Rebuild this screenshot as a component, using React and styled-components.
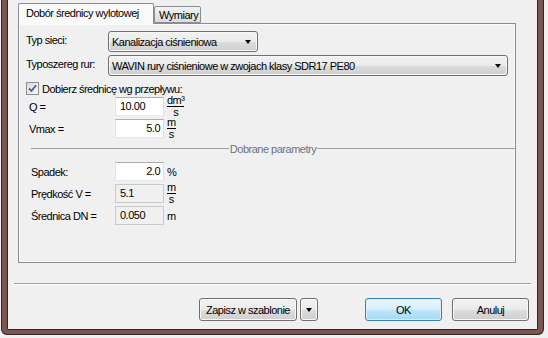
import React from 'react';
import styled, { createGlobalStyle } from 'styled-components';

const GlobalStyle = createGlobalStyle`
  html, body {
    margin: 0;
    padding: 0;
    background: #f0f0f0;
  }
  body {
    font-family: "Liberation Sans", Arial, sans-serif;
    font-size: 11px;
    letter-spacing: -0.5px;
    color: #000;
  }
  #root {
    width: 548px;
    height: 338px;
    overflow: hidden;
  }
`;

const Frame = styled.div`
  margin-left: 1px;
  width: 543px;
  height: 335px;
  box-sizing: border-box;
  background: #7a5651;
  border: 1px solid #2e2424;
  border-top: none;
  border-radius: 0 0 6px 6px;
  padding: 0 5px 4px 5px;
`;

const Client = styled.div`
  height: 100%;
  box-sizing: border-box;
  display: flex;
  flex-direction: column;
  background: #f0f0f0;
  border: 1px solid #2e2424;
  border-top: none;
  border-radius: 0 0 2px 2px;
`;

const TabArea = styled.div`
  padding: 3px 21px 0 10px;
`;

const TabStrip = styled.div`
  display: flex;
  align-items: flex-end;
  height: 20px;
`;

const Tab = styled.div`
  position: relative;
  box-sizing: border-box;
  width: ${({ $w }) => $w}px;
  height: ${({ $active }) => ($active ? 21 : 17)}px;
  margin-bottom: ${({ $active }) => ($active ? -1 : 0)}px;
  z-index: ${({ $active }) => ($active ? 1 : 0)};
  border: 1px solid #898c95;
  border-bottom: ${({ $active }) => ($active ? 'none' : '1px solid #898c95')};
  border-radius: 2px 2px 0 0;
  background: ${({ $active }) =>
    $active ? '#fafafa' : 'linear-gradient(#f3f3f3, #e6e6e6 50%, #dcdcdc)'};
  padding-left: ${({ $active }) => ($active ? 7 : 4)}px;
  line-height: ${({ $active }) => ($active ? 18 : 16)}px;
  white-space: nowrap;
`;

const Panel = styled.div`
  height: 240px;
  box-sizing: border-box;
  border: 1px solid #898c95;
  background: #f0f0f0;
  box-shadow: inset 0 0 0 1px #fbfbfb;
  padding: 7px 7px 0 7px;
  display: flex;
  flex-direction: column;
`;

const ComboRow = styled.div`
  display: flex;
  align-items: flex-start;
  margin-top: ${({ $mt }) => $mt || 0}px;
`;

const ComboLabel = styled.div`
  width: 82px;
  padding-top: 3px;
  white-space: nowrap;
`;

const Combo = styled.div`
  width: ${({ $w }) => $w}px;
  height: 21px;
  box-sizing: border-box;
  border: 1px solid #707070;
  border-radius: 3px;
  background: linear-gradient(#f2f2f2 0%, #ebebeb 50%, #dddddd 51%, #cfcfcf 100%);
  box-shadow: inset 0 0 0 1px #f8f8f8;
  display: flex;
  align-items: center;
  justify-content: space-between;
  padding: 0 6px 0 3px;
  white-space: nowrap;
`;

const Arrow = styled.span`
  width: 0;
  height: 0;
  border-left: 3px solid transparent;
  border-right: 3px solid transparent;
  border-top: 4px solid #000;
  margin-top: 1px;
`;

const CheckRow = styled.label`
  display: flex;
  align-items: center;
  height: 13px;
  margin-top: 6px;
`;

const CheckBox = styled.span`
  width: 13px;
  height: 13px;
  box-sizing: border-box;
  border: 1px solid #8e8f8f;
  background: linear-gradient(135deg, #dadada, #fbfbfb);
  display: flex;
  align-items: center;
  justify-content: center;
  margin-right: 3px;
`;

const FieldRow = styled.div`
  display: flex;
  align-items: center;
  height: 19px;
  margin-top: ${({ $mt }) => $mt || 0}px;
`;

const FieldLabel = styled.div`
  width: 89px;
  box-sizing: border-box;
  padding-left: ${({ $indent }) => $indent}px;
  white-space: nowrap;
`;

const Field = styled.div`
  width: 49px;
  height: 19px;
  box-sizing: border-box;
  border: 1px solid;
  border-color: ${({ $readonly }) =>
    $readonly ? '#c9c9c9' : '#abadb3 #dbdfe6 #e3e9ef #e2e3ea'};
  background: ${({ $readonly }) => ($readonly ? '#f0f0f0' : '#fff')};
  padding: 0 3px 0 4px;
  line-height: 17px;
  text-align: ${({ $align }) => $align || 'left'};
`;

const Unit = styled.span`
  margin-left: 3px;
`;

const Fraction = styled.span`
  margin-left: 3px;
  display: inline-flex;
  flex-direction: column;
  align-items: center;
  line-height: 9px;
`;

const Numer = styled.span`
  border-bottom: 1px solid #000;
  padding-bottom: 1px;
`;

const Denom = styled.span`
  padding-top: 1px;
`;

const GroupHeader = styled.div`
  display: flex;
  align-items: center;
  height: 13px;
  margin: 4px -7px 0 5px;
`;

const GroupLine = styled.span`
  flex: 1;
  height: 1px;
  background: #a0a0a0;
`;

const GroupTitle = styled.span`
  color: #6d7282;
  padding: 0 1px;
`;

const Separator = styled.div`
  margin: 20px 6px 0 6px;
  height: 1px;
  background: #a0a0a0;
  box-shadow: 0 1px 0 #fff;
`;

const ButtonRow = styled.div`
  display: flex;
  justify-content: flex-end;
  padding: 14px 8px 0 0;
`;

const Button = styled.button`
  width: ${({ $w }) => $w}px;
  height: 23px;
  margin-left: ${({ $ml }) => $ml || 0}px;
  box-sizing: border-box;
  padding: 0;
  font-family: inherit;
  font-size: 11px;
  letter-spacing: inherit;
  color: #000;
  border: 1px solid ${({ $primary }) => ($primary ? '#3c7fb1' : '#707070')};
  border-radius: 3px;
  background: ${({ $primary }) =>
    $primary
      ? 'linear-gradient(#eaf6fd 0%, #d9f0fc 50%, #bee6fd 51%, #a7d9f5 100%)'
      : 'linear-gradient(#f2f2f2 0%, #ebebeb 50%, #dddddd 51%, #cfcfcf 100%)'};
  box-shadow: inset 0 0 0 1px ${({ $primary }) => ($primary ? '#d8effb' : '#f8f8f8')};
  display: flex;
  align-items: center;
  justify-content: center;
`;

const Frac = ({ top, bottom }) => (
  <Fraction>
    <Numer>{top}</Numer>
    <Denom>{bottom}</Denom>
  </Fraction>
);

export default function App() {
  return (
    <>
      <GlobalStyle />
      <Frame>
        <Client>
          <TabArea>
            <TabStrip>
              <Tab $active $w={136}>Dobór średnicy wylotowej</Tab>
              <Tab $w={47}>Wymiary</Tab>
            </TabStrip>
            <Panel>
              <ComboRow>
                <ComboLabel>Typ sieci:</ComboLabel>
                <Combo $w={150}>
                  <span>Kanalizacja ciśnieniowa</span>
                  <Arrow />
                </Combo>
              </ComboRow>
              <ComboRow $mt={3}>
                <ComboLabel>Typoszereg rur:</ComboLabel>
                <Combo $w={400}>
                  <span>WAVIN rury ciśnieniowe w zwojach klasy SDR17 PE80</span>
                  <Arrow />
                </Combo>
              </ComboRow>

              <CheckRow>
                <CheckBox>
                  <svg width="9" height="9" viewBox="0 0 9 9">
                    <path d="M1 4.5 L3.5 7 L8 1.2" fill="none" stroke="#4a5f97" strokeWidth="1.8" />
                  </svg>
                </CheckBox>
                Dobierz średnicę wg przepływu:
              </CheckRow>

              <FieldRow $mt={2}>
                <FieldLabel $indent={3}>Q =</FieldLabel>
                <Field>10.00</Field>
                <Frac top="dm³" bottom="s" />
              </FieldRow>
              <FieldRow $mt={3}>
                <FieldLabel $indent={3}>Vmax =</FieldLabel>
                <Field $align="right">5.0</Field>
                <Frac top="m" bottom="s" />
              </FieldRow>

              <GroupHeader>
                <GroupLine />
                <GroupTitle>Dobrane parametry</GroupTitle>
                <GroupLine />
              </GroupHeader>

              <FieldRow $mt={7}>
                <FieldLabel $indent={5}>Spadek:</FieldLabel>
                <Field $align="right">2.0</Field>
                <Unit>%</Unit>
              </FieldRow>
              <FieldRow $mt={3}>
                <FieldLabel $indent={5}>Prędkość V =</FieldLabel>
                <Field $readonly>5.1</Field>
                <Frac top="m" bottom="s" />
              </FieldRow>
              <FieldRow $mt={3}>
                <FieldLabel $indent={5}>Średnica DN =</FieldLabel>
                <Field $readonly>0.050</Field>
                <Unit>m</Unit>
              </FieldRow>
            </Panel>
          </TabArea>

          <Separator />
          <ButtonRow>
            <Button $w={98}>Zapisz w szablonie</Button>
            <Button $w={18} $ml={3}>
              <Arrow />
            </Button>
            <Button $w={77} $ml={47} $primary>OK</Button>
            <Button $w={77} $ml={10}>Anuluj</Button>
          </ButtonRow>
        </Client>
      </Frame>
    </>
  );
}
